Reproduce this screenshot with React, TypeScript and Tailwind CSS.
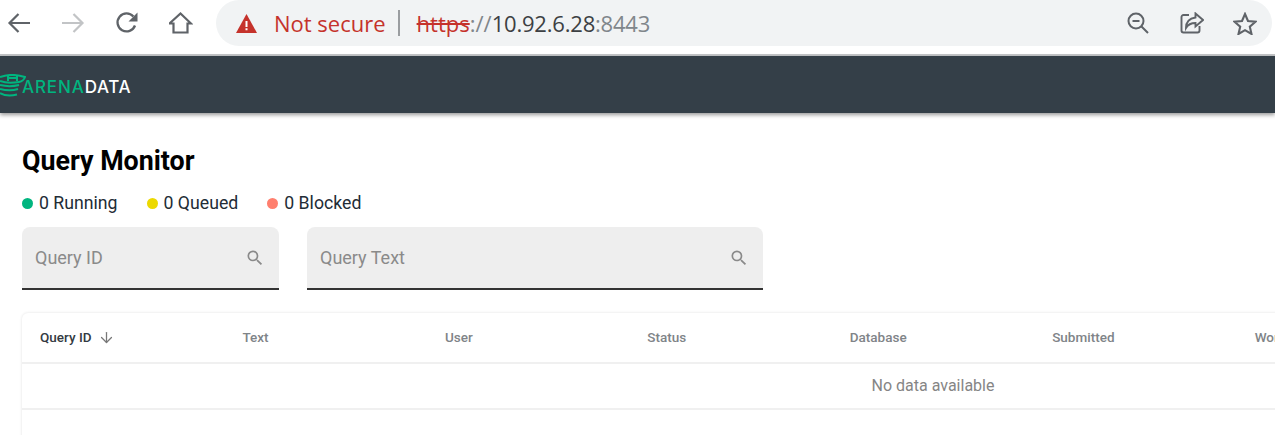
import React from 'react';
import { ArrowDown } from 'lucide-react';

const columns = ['Query ID', 'Text', 'User', 'Status', 'Database', 'Submitted', 'Workgroup', '', ''];

const BackIcon = () => (
  <svg width="24" height="22" viewBox="0 0 24 22" fill="none" stroke="#5f6368" strokeWidth="2.2">
    <path d="M23 11H3M11.5 2 2.5 11l9 9" />
  </svg>
);

const ForwardIcon = () => (
  <svg width="24" height="22" viewBox="0 0 24 22" fill="none" stroke="#c2c4c6" strokeWidth="2.2">
    <path d="M1 11h20M12.5 2l9 9-9 9" />
  </svg>
);

const ReloadIcon = () => (
  <svg width="24" height="24" viewBox="0 0 24 24" fill="none">
    <path d="M20 14.5A9 9 0 1 1 18.4 5.6" stroke="#5f6368" strokeWidth="2.3" />
    <path d="M22.5 1.5v9h-9z" fill="#5f6368" />
  </svg>
);

const HomeIcon = () => (
  <svg width="24" height="24" viewBox="0 0 24 24" fill="none" stroke="#5f6368" strokeWidth="2.2">
    <path d="M0.5 12.5 11.500 2.500l10.500 10H18.500v9h-14v-9z" />
  </svg>
);

const WarningIcon = () => (
  <svg width="21" height="19" viewBox="0 0 21 19">
    <path d="M10.5 0 21 19H0z" fill="#c5322b" />
    <path d="M9.5 7h2v6h-2zM9.5 14.3h2v2h-2z" fill="#fff" />
  </svg>
);

const ZoomOutIcon = () => (
  <svg width="22" height="22" viewBox="0 0 22 22" fill="none" stroke="#5f6368" strokeWidth="2">
    <circle cx="9" cy="9" r="7.5" />
    <path d="M5.5 9h7M14.5 14.5l6.5 6.5" />
  </svg>
);

const ShareIcon = () => (
  <svg width="24" height="22" viewBox="0 0 24 22" fill="none" stroke="#5f6368" strokeWidth="1.9">
    <path d="M9 3H3.5A2 2 0 0 0 1.500 5v13.500a2 2 0 0 0 2 2h14a2 2 0 0 0 2-2V14" />
    <path d="M15.500 1.500 23 8l-7.500 6.500V11C11 11 8 12.500 6 16c0-5.500 3-9.500 9.500-10.500z" />
  </svg>
);

const StarIcon = () => (
  <svg width="24" height="23" viewBox="0 0 24 23" fill="none" stroke="#5f6368" strokeWidth="2.100">
    <path d="m12 2 3 7 7.500.7-5.700 5 1.700 7.300L12 18.200 5.500 22l1.700-7.300-5.700-5L9 9z" />
  </svg>
);

const LogoMark = () => (
  <svg width="26" height="23" viewBox="0 0 26 23" fill="none" stroke="#00b57f" strokeWidth="2" className="-mt-[5px]">
    <path d="M0 3c7-2.500 17-2.500 25 0-1 3-3 4.500-6 5-6 1-14 1-19-1" />
    <path d="M8 2v5M17 2v5M8 4h9" />
    <path d="M0 11c6 1.500 13 1.500 19 0M0 15c6 1.500 13 1.500 18 0M0 19c5 3 11 3 17 1.500" />
  </svg>
);

const SearchIcon = () => (
  <svg width="20" height="20" viewBox="0 0 24 24" fill="#8a8a8a">
    <path d="M15.5 14h-.79l-.28-.27A6.471 6.471 0 0 0 16 9.500 6.500 6.500 0 1 0 9.500 16c1.610 0 3.090-.59 4.230-1.570l.27.28v.79l5 4.990L20.490 19l-4.990-5zm-6 0C7.010 14 5 11.990 5 9.500S7.010 5 9.500 5 14 7.010 14 9.500 11.990 14 9.500 14z" />
  </svg>
);

function StatusItem({ color, label }: { color: string; label: string }) {
  return (
    <div className="flex items-center gap-[6px]">
      <span className={`w-[11px] h-[11px] rounded-full ${color}`} />
      <span>{label}</span>
    </div>
  );
}

function SearchField({ label, width }: { label: string; width: string }) {
  return (
    <div className={`${width} h-[63px] flex items-center justify-between pl-[13px] pr-[14px] bg-[#eeeeee] rounded-t-[8px] border-b-2 border-[#333333]`}>
      <span className="text-[18px] text-[#8a8a8a]">{label}</span>
      <SearchIcon />
    </div>
  );
}

export default function App() {
  return (
    <div className="w-[1275px] h-[435px] overflow-hidden bg-white font-['Roboto',sans-serif]">
      {/* browser toolbar */}
      <div className="h-[56px] flex items-start pl-[7px] pr-[3px] bg-white border-b-2 border-[#c4c6c8]">
        <div className="flex items-center h-[46px] gap-[30px] w-[209px]">
          <BackIcon />
          <ForwardIcon />
          <ReloadIcon />
          <HomeIcon />
        </div>
        <div className="flex-1 h-[46px] flex items-center pl-[20px] pr-[15px] bg-[#f1f3f4] rounded-full font-['Open_Sans',sans-serif] text-[22px]">
          <WarningIcon />
          <span className="ml-[17px] text-[#c5322b]">Not secure</span>
          <span className="ml-[12px] mr-[17px] w-[2px] h-[26px] bg-[#9a9da0]" />
          <span className="text-[#c5322b] line-through">https</span>
          <span className="text-[#80868b]">://</span>
          <span className="text-[#3c4043] tracking-[-0.2px]">10.92.6.28</span>
          <span className="text-[#80868b] tracking-[-0.2px]">:8443</span>
          <div className="ml-auto flex items-center">
            <ZoomOutIcon />
            <span className="ml-[31px]"><ShareIcon /></span>
            <span className="ml-[29px]"><StarIcon /></span>
          </div>
        </div>
      </div>

      {/* app header */}
      <div className="h-[57px] pt-[7px] flex items-center bg-[#343f48] shadow-[0_2px_4px_rgba(0,0,0,0.4)]">
        <LogoMark />
        <span className="-ml-[4px] text-[17px] font-['Inter',sans-serif] font-medium tracking-[0.9px] text-[#00b57f]">ARENA</span>
        <span className="text-[17px] font-['Inter',sans-serif] font-medium tracking-[0.6px] text-white">DATA</span>
      </div>

      <main className="pt-[32px] pl-[22px]">
        <h1 className="text-[26.800px] leading-[32px] font-bold text-black">Query Monitor</h1>
        <div className="mt-[14px] h-[24px] flex items-center gap-[29px] text-[17.700px] text-[#222c36]">
          <StatusItem color="bg-[#00b57f]" label="0 Running" />
          <StatusItem color="bg-[#ecd900]" label="0 Queued" />
          <StatusItem color="bg-[#ff7f6e]" label="0 Blocked" />
        </div>
        <div className="mt-[12px] flex gap-[28px]">
          <SearchField label="Query ID" width="w-[257px]" />
          <SearchField label="Query Text" width="w-[456px]" />
        </div>

        <div className="mt-[23px] w-[1822px] rounded-[6px] bg-white shadow-[0_0_3px_rgba(0,0,0,0.12)]">
          <table className="w-full table-fixed text-left">
            <thead>
              <tr className="h-[50px] border-b-2 border-[#f0f0f0]">
                {columns.map((col, idx) => (
                  <th key={idx} className={`pl-[18px] text-[13.500px] font-medium ${idx === 0 ? 'text-[#333a42] font-bold' : 'text-[#808488]'}`}>
                    <span className="inline-flex items-center gap-[6px]">
                      {col}
                      {idx === 0 && <ArrowDown size={17} strokeWidth={1.800} className="text-[#777777]" />}
                    </span>
                  </th>
                ))}
              </tr>
            </thead>
            <tbody>
              <tr className="h-[46px] border-b-2 border-[#f0f0f0]">
                <td colSpan={9} className="text-center text-[16px] text-[#858585]">No data available</td>
              </tr>
            </tbody>
          </table>
          <div className="h-[40px]" />
        </div>
      </main>
    </div>
  );
}
